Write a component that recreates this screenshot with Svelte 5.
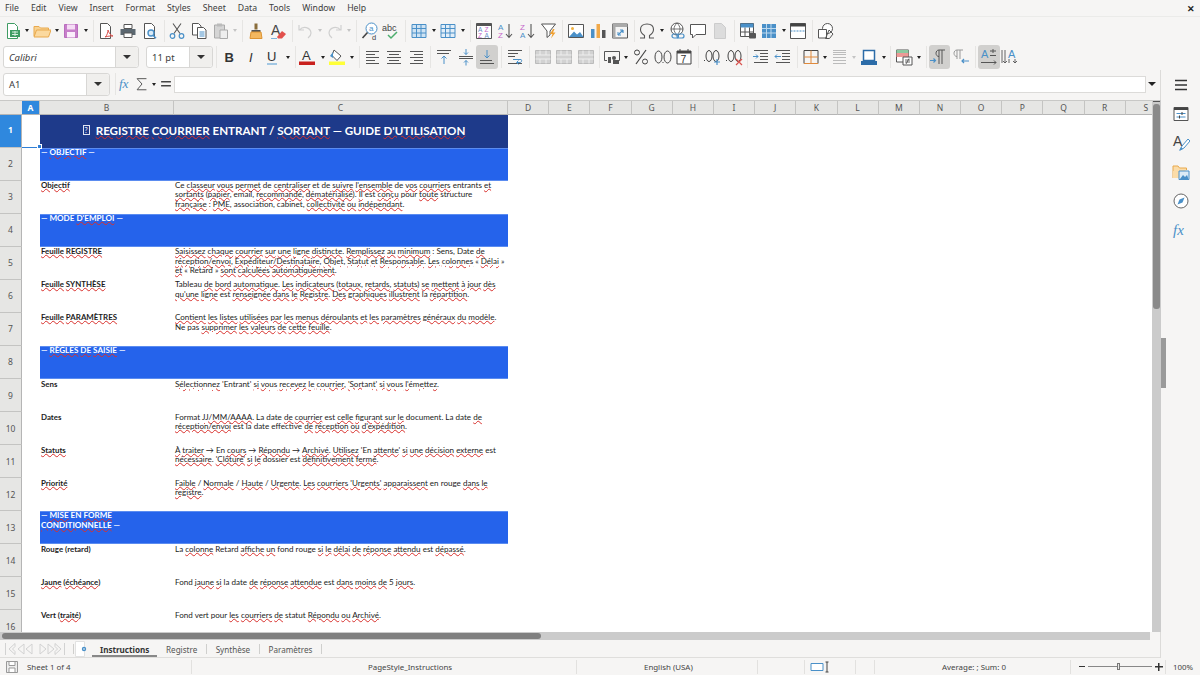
<script>
  const menus = ['File', 'Edit', 'View', 'Insert', 'Format', 'Styles', 'Sheet', 'Data', 'Tools', 'Window', 'Help'];

  const g = '#555', b = '#4a90c8', lb = '#7fb4dc';
  const lines = (ys, x1, x2, c = g) => ys.map((y, i) => `<path d="M${Array.isArray(x1) ? x1[i] : x1} ${y}H${Array.isArray(x2) ? x2[i] : x2}" stroke="${c}"/>`).join('');
  const cells = (c, f = 'none') => `<path d="M2 2.5h14v13H2z" fill="${f}" stroke="${c}"/><path d="M2 6.5h14M2 11h14M6.5 2.5v13M11 2.5v13" stroke="${c}"/>`;
  const label = (t, x, y, c, s = 8, extra = '') => `<text x="${x}" y="${y}" fill="${c}" font-size="${s}" font-family="Liberation Sans" ${extra}>${t}</text>`;

  const icons = {
    new: `<path d="M3.5 1.5h7l3 3v12h-10z" fill="#fff" stroke="#3f9c63"/><path d="M6 8h10v7H6z" fill="#3f9c63"/><path d="M8 10h6M8 12.5h6M11 9v5" stroke="#d7efe0"/>`,
    open: `<path d="M1 14V4.5h5l1.500 1.500h8v2" fill="#f8d291" stroke="#e9a94d"/><path d="M1 15l2.500-7H18l-2.500 7z" fill="#fbd99f" stroke="#e9a94d"/>`,
    save: `<path d="M2.500 2.500h13v13h-13z" fill="#c77fca" stroke="#b96cbd"/><path d="M5 2.500h8v5H5z" fill="#f5dcf5"/><path d="M5 10h8v5.500H5z" fill="#fbeefb"/>`,
    pdf: `<path d="M3.500 1.500h7l3 3v12h-10z" fill="#fff" stroke="${g}"/><path d="M8 15c2-1 3-5 3-7 1 3 2 5 5 6-3 0-5 0-8 1z" fill="none" stroke="#d9534f"/>`,
    print: `<path d="M5 2.500h8v4H5z" fill="#fff" stroke="${g}"/><path d="M1.500 7h15v6h-15z" fill="#5b6770"/><path d="M5 11h8v4.500H5z" fill="#fff" stroke="${g}"/>`,
    preview: `<path d="M3.500 1.500h7l3 3v12h-10z" fill="#fff" stroke="${g}"/><circle cx="10" cy="11" r="3" fill="#dcebf6" stroke="${b}" stroke-width="1.400"/><path d="M12 13.200l3 3" stroke="${b}" stroke-width="1.600"/>`,
    cut: `<path d="M5 1.500l7 10M13 1.500l-7 10" stroke="${g}" stroke-width="1.100"/><circle cx="4.500" cy="14" r="2.300" fill="none" stroke="${b}" stroke-width="1.200"/><circle cx="13.500" cy="14" r="2.300" fill="none" stroke="${b}" stroke-width="1.200"/>`,
    copy: `<path d="M2.500 1.500h6l2.500 2.500v9h-8.500z" fill="#fff" stroke="${g}"/><path d="M7.500 5.500h6l2.500 2.500v8.500h-8.500z" fill="#fff" stroke="${g}"/><path d="M9.500 10h5M9.500 12h5M9.500 14h5" stroke="${b}"/>`,
    paste: `<path d="M2.500 3h10v13h-10z" fill="#d5d5d5" stroke="#aaa"/><path d="M5 1.500h5v3H5z" fill="#bbb"/><path d="M8 8h7.500v8.500H8z" fill="#eee" stroke="#aaa"/>`,
    clone: `<path d="M7.500 1.500h3v6h-3z" fill="#8a6d3b"/><path d="M4.500 8h9v2h-9z" fill="#555"/><path d="M4 10h10l1 6.500H3z" fill="#f4b860" stroke="#dd9433"/>`,
    clear: `${label('A', 2, 13, '#444', 14)}<path d="M8 15l5-6 4 3-4 4.500H9z" fill="#e2504c"/><path d="M2 16.500h6" stroke="${lb}"/>`,
    undo: `<path d="M3 3v5h5M3.500 8C7 3.500 14.500 5 15 11c0 2-1 3.500-3 5" fill="none" stroke="#d0d0d0" stroke-width="1.200"/>`,
    redo: `<path d="M15 3v5h-5M14.500 8C11 3.500 3.500 5 3 11c0 2 1 3.500 3 5" fill="none" stroke="#d0d0d0" stroke-width="1.200"/>`,
    find: `<circle cx="10.500" cy="6.500" r="5.500" fill="#fff" stroke="${b}"/>${label('a', 8, 9, b, 8)}<path d="M6.500 10.500L1.500 16" stroke="#444" stroke-width="1.600"/>${label('d', 11, 17.500, '#444', 7.500)}`,
    spell: `${label('abc', 0, 9, '#444', 9)}<path d="M6 13l3 3 6-6" fill="none" stroke="#4cae6d" stroke-width="1.500"/>`,
    table: cells(b, '#cfe3f3'),
    grid: cells(b, '#e2eef8'),
    sort: `<path d="M1.500 1.500h15v15h-15z" fill="#fff" stroke="${g}"/><path d="M1.500 1.500h15v2.500h-15z" fill="${g}"/>${label('A', 3, 10, '#6a8fc8', 6.500)}${label('Z', 9.500, 10, '#c565c9', 6.500)}${label('Z', 3, 16, '#c565c9', 6.500)}${label('A', 9.500, 16, '#6a8fc8', 6.500)}`,
    az: `${label('A', 2, 8, b, 8)}${label('Z', 2, 16, '#c565c9', 8)}<path d="M13 2v13M10 12l3 3.500 3-3.500" fill="none" stroke="${g}" stroke-width="1.100"/>`,
    za: `${label('Z', 2, 8, '#c565c9', 8)}${label('A', 2, 16, b, 8)}<path d="M13 2v13M10 12l3 3.500 3-3.500" fill="none" stroke="${g}" stroke-width="1.100"/>`,
    filter: `<path d="M1.500 2h14l-5.500 7v4l-3 2.500V9z" fill="#fff" stroke="${g}"/><path d="M13 7l-3 5h2.500l-1.500 4.500 4.500-6h-2.500l1.500-3.500z" fill="#f0a030"/>`,
    image: `<path d="M1.500 2.500h15v13h-15z" fill="#fff" stroke="${g}"/><circle cx="5.500" cy="6.500" r="1.500" fill="#f0b040"/><path d="M2 15l5-5.500 3 3 3-2.500 3.500 5z" fill="${b}"/>`,
    chart: `<path d="M2 7h3.500v9H2z" fill="${b}"/><path d="M7.500 2h3.500v14H7.500z" fill="#f0a94a"/><path d="M13 8h3.500v8H13z" fill="#555"/>`,
    pivot: `<path d="M1.500 2h15v14h-15z" fill="#f4f4f4" stroke="${g}"/><path d="M1.500 2h15v3h-15zM1.500 5h3v11h-3z" fill="#aaa"/><path d="M7 13l5-5M12 8h-3M12 8v3" fill="none" stroke="${b}" stroke-width="1.200"/><path d="M7 13h3M7 13v-3" fill="none" stroke="${b}"/>`,
    omega: `<path d="M2 16h4.500v-2.500C4 12 2.500 10 2.500 7.500 2.500 4 5 2 9 2s6.500 2 6.500 5.500c0 2.500-1.500 4.500-4 6V16H16" fill="none" stroke="#555" stroke-width="1.100"/>`,
    link: `<circle cx="9" cy="7" r="6" fill="#fff" stroke="${g}"/><path d="M3 7h12M9 1c-4 4-4 8 0 12M9 1c4 4 4 8 0 12" fill="none" stroke="${g}" stroke-width=".8"/><rect x="4" y="12" width="6.500" height="4" rx="2" fill="none" stroke="${b}" stroke-width="1.200"/><rect x="9" y="12" width="7" height="4" rx="2" fill="none" stroke="${b}" stroke-width="1.200"/>`,
    comment: `<path d="M1.500 2.500h15v10H7l-3.500 3.500v-3.500h-2z" fill="#fff" stroke="${g}"/>`,
    header: `<path d="M3.500 1.500h7l4 4v11h-11z" fill="#dcdcdc" stroke="#ccc"/>`,
    sheetp: `<path d="M1.500 1.500h13v13h-13z" fill="#fff" stroke="${g}"/><path d="M1.500 1.500h13v4h-13z" fill="${b}"/><path d="M6 5.500v9M10.500 5.500v9M1.500 10h13" stroke="${g}"/><rect x="10" y="11" width="7" height="5.500" rx="1" fill="${g}"/>`,
    sheetd: `<path d="M2 2h14v14H2z" fill="${b}"/><path d="M6.500 2v14M11 2v14M2 6.500h14M2 11h14" stroke="#bcd8ee"/>`,
    freeze: `<path d="M1.500 1.500h15v15h-15z" fill="#fff" stroke="${g}"/><path d="M1.500 1.500h15v3h-15z" fill="#444"/><path d="M1.500 9h15" stroke="${b}" stroke-dasharray="2 1"/>`,
    shapes: `<circle cx="10.500" cy="6.500" r="5" fill="#fff" stroke="${g}"/><path d="M1.500 7.500h8v8.500h-8z" fill="#fff" stroke="${g}"/><path d="M12 8l4 4-3.500 4.500H8.500z" fill="none" stroke="${g}"/>`,

    bold: label('B', 3.500, 14, '#333', 13, 'font-weight="700" textLength="9"'),
    italic: label('I', 6, 14, '#333', 13, 'font-style="italic"'),
    under: `${label('U', 3, 13, '#333', 13)}<path d="M3 16h10" stroke="${lb}" stroke-width="1.400"/>`,
    color: `${label('A', 3, 12, '#333', 13)}<path d="M0 13.500h16v3.500H0z" fill="#c9211e"/>`,
    hl: `<path d="M5 2l7 6-4 4.500-5-5z" fill="#fff" stroke="#555"/><path d="M1 8l3-4v6z" fill="${b}"/><path d="M0 13.500h16v3.500H0z" fill="#ffff38"/>`,
    left: lines([3.500, 6.500, 9.500, 12.500, 15.500], 2, [15, 11, 15, 11, 15]),
    center: lines([3.500, 6.500, 9.500, 12.500, 15.500], [2, 4, 2, 4, 2], [16, 14, 16, 14, 16]),
    right: lines([3.500, 6.500, 9.500, 12.500, 15.500], [3, 7, 3, 7, 3], 16),
    top: `${lines([2.500, 5.500], 2, [16, 14])}<path d="M9 16V8M6.500 10.500L9 8l2.500 2.500" fill="none" stroke="${b}"/>`,
    mid: `${lines([8.500, 10.500], 2, [16, 16])}<path d="M9 1v5.500M7 4.500l2 2 2-2M9 17.500V12.500M7 14.500l2-2 2 2" fill="none" stroke="${b}"/>`,
    bottom: `${lines([12.500, 15.500], 2, [14, 16])}<path d="M9 2v8M6.500 7.500L9 10l2.500-2.500" fill="none" stroke="${b}"/>`,
    wrap: `${lines([2.500, 5.500, 8.500, 15.500], 2, [16, 12, 9, 16])}<path d="M7 11.500h8c1 0 1 3-1 3h-3M12.500 12.500l-2 2 2 2" fill="none" stroke="${b}"/>`,
    merge: `<path d="M1.500 2.500h15v13h-15z" fill="#d2d2d2" stroke="#bbb"/><path d="M1.500 7h15M1.500 11h15M6 2.500v4.500M12 2.500v4.500M6 11v4.500M12 11v4.500" stroke="#eee"/>`,
    curr: `<path d="M1.500 3.500h15v9H13" fill="none" stroke="${g}"/><path d="M1.500 3.500v9H4" fill="none" stroke="${g}"/><rect x="5" y="9" width="3" height="6" fill="${g}"/><circle cx="11" cy="10" r="2" fill="${g}"/><rect x="10" y="12" width="6" height="4" fill="#555"/>`,
    pct: `<path d="M14 2L4 16" stroke="#444" stroke-width="1.200"/><circle cx="5" cy="4.500" r="2.500" fill="none" stroke="#444"/><circle cx="13" cy="13.500" r="2.500" fill="none" stroke="#444"/>`,
    num: `<ellipse cx="4.500" cy="9" rx="3.500" ry="6" fill="none" stroke="#444"/><ellipse cx="13.500" cy="9" rx="3.500" ry="6" fill="none" stroke="#444"/><rect x="8.500" y="14" width="1" height="1" fill="#444"/>`,
    date: `<path d="M2 3h14v13H2z" fill="#fff" stroke="#444"/><path d="M2 3h14v2.500H2z" fill="#444"/><path d="M5 1v3M13 1v3" stroke="#444"/>${label('7', 5.500, 14.500, '#333', 10.500)}`,
    addd: `<ellipse cx="6" cy="8" rx="3" ry="5.500" fill="none" stroke="#444"/><ellipse cx="13" cy="8" rx="3" ry="5.500" fill="none" stroke="#444"/><rect x="1" y="12" width="1" height="1" fill="#444"/><path d="M14 11v6M11 14h6" stroke="${b}" stroke-width="1.200"/>`,
    deld: `<ellipse cx="6" cy="8" rx="3" ry="5.500" fill="none" stroke="#444"/><ellipse cx="13" cy="8" rx="3" ry="5.500" fill="none" stroke="#444"/><rect x="1" y="12" width="1" height="1" fill="#444"/><path d="M11 11l6 6M17 11l-6 6" stroke="#d9534f" stroke-width="1.200"/>`,
    indent: `${lines([2.500, 5.500, 8.500, 11.500, 14.500], [2, 8, 8, 8, 2], 16)}<path d="M1 8.500h5M4 6.500l2 2-2 2" fill="none" stroke="${b}"/>`,
    outdent: `${lines([2.500, 5.500, 8.500, 11.500, 14.500], [2, 8, 8, 8, 2], 16)}<path d="M1 8.500h6M3 6.500l-2 2 2 2" fill="none" stroke="${b}"/>`,
    border: `<path d="M2 2.500h14v13H2z" fill="none" stroke="#444"/><path d="M9 2.500v13M2 9h14" stroke="#e08a3c"/><path d="M2 15.500h14" stroke="#e08a3c"/>`,
    bstyle: lines([2.500, 4.500, 6.500, 9.500, 12.500, 15.500], 2, 15, '#bbb'),
    bcolor: `<path d="M3.500 2.500h11v10h-11z" fill="#fff" stroke="#2c6ca8" stroke-width="1.500"/><path d="M1 13h16v4H1z" fill="#2c6ca8"/>`,
    cond: `<path d="M1.500 2h12v12h-12z" fill="#fff" stroke="${g}"/><path d="M1.500 2h12v3h-12z" fill="#8cc9a0"/><path d="M1.500 5h12v4h-12z" fill="#ec9a96"/><path d="M8 9h9v8H8z" fill="#fff" stroke="${g}"/><path d="M10 12h5M10 14h5M14 10.500l-3 5.500" stroke="#444" stroke-width=".8"/>`,
    ltr: `<path d="M9 16V2M12 16V2M15 2H9C5 2 5 8.500 9 8.500" fill="none" stroke="${g}"/><path d="M0 12.500h5.500M3.500 10.500l2 2-2 2" fill="none" stroke="${b}" stroke-width="1.200"/>`,
    rtl: `<path d="M5 11V2M8 11V2M11 2H5C1 2 1 8.500 5 8.500" fill="none" stroke="#999"/><path d="M10 13h7M12 11l-2 2 2 2" fill="none" stroke="${b}" stroke-width="1.200"/>`,
    horiz: `${label('A', 1, 10, b, 11)}<path d="M10 3h6M13 1v4M10 7.500h6M1 14.500h15M14 12.500l2 2-2 2" fill="none" stroke="${g}"/>`,
    vert: `${label('A', 7, 10, b, 11)}<path d="M4 2v13M2 13l2 2 2-2M1 2v13M8 11v4M14 11v4M12 13l2 2 2-2" fill="none" stroke="${g}" stroke-width=".9"/>`,

    menu: `<path d="M3 4.500h12M3 9h12M3 13.500h12" stroke="#333" stroke-width="1.500"/>`,
    props: `<path d="M2 2.500h14v13H2z" fill="#fff" stroke="${g}"/><path d="M2 2.500h14v2.500H2z" fill="#444"/><path d="M4.500 8.500h9M4.500 12h9" stroke="${b}"/><path d="M10 7v3M7.500 10.500v3" stroke="#444"/>`,
    styles: `${label('A', 1, 12, '#444', 14)}<path d="M16 5l-6 7-2 4 4-2 6-7z" fill="#fff" stroke="${b}"/><path d="M9 13l-2 4 4-2z" fill="${b}"/>`,
    gallery: `<path d="M1 15V3h5l1.500 2h7v2" fill="#fbdca8" stroke="#e9a94d"/><path d="M1 8h11v7H1z" fill="#fbdca8"/><path d="M7 8h10v8.500H7z" fill="#dcebf6" stroke="${b}"/><path d="M8 16l3-4 2 2 2-2 1.500 4z" fill="${b}"/>`,
    nav: `<circle cx="9" cy="9" r="7" fill="#fff" stroke="#666"/><path d="M12.500 5.500L10.500 10.500 5.500 12.500 7.500 7.500z" fill="${b}"/>`,
    fx: `<text x="1" y="14" fill="${b}" font-size="15" font-family="Liberation Serif" font-style="italic">fx</text>`,
    sigma: `<path d="M14 3H3.500L9 9l-5.500 6.500H14" fill="none" stroke="#555" stroke-width="1.100"/>`,
    equal: `<path d="M3.500 6.500h11M3.500 11h11" stroke="#444" stroke-width="1.700"/>`
  };

  // '|' is a separator, '/' a narrow one, 'd' a small dropdown arrow, '!' marks a pressed button, '~' a greyed arrow
  const row1 = 'new d open d save d | pdf print preview | cut copy paste ~ | clone clear | undo ~ redo ~ | find spell | table d grid d | sort az za filter | image chart pivot | omega d link comment header | sheetp sheetd d freeze | shapes'.split(' ');
  const row2 = '| bold italic under d | color d hl d | left center right | top mid !bottom | wrap | merge merge merge / curr d pct num date | addd deld | indent outdent | border d bstyle ~ bcolor d | cond d | !ltr rtl | !horiz vert'.split(' ');
  const side = ['menu', 'props', 'styles', 'gallery', 'nav', 'fx'];
  const cols = ['D', 'E', 'F', 'G', 'H', 'I', 'J', 'K', 'L', 'M', 'N', 'O', 'P', 'Q', 'R', 'S'];

  const sheet = [
    { sec: ['— {OBJECTIF} —'] },
    { label: '{Objectif}', text: ["Ce {classeur} {vous} {permet} de {centraliser} et de {suivre} {l'ensemble} de {vos} {courriers} entrants {et}", '{sortants} ({papier}, email, {recommandé}, {dématérialisé}). {Il} est {conçu} pour {toute} structure', '{française} : {PME}, association, cabinet, {collectivité} {ou} {indépendant}.'] },
    { sec: ["— MODE {D'EMPLOI} —"] },
    { label: '{Feuille} {REGISTRE}', text: ['{Saisissez} {chaque} {courrier} {sur} {une} {ligne} {distincte}. {Remplissez} {au} {minimum} : Sens, Date {de}', '{réception/envoi}, {Expéditeur/Destinataire}, {Objet}, {Statut} {et} {Responsable}. {Les} {colonnes} « {Délai} »', '{et} « Retard » {sont} {calculées} {automatiquement}.'] },
    { label: '{Feuille} {SYNTHÈSE}', text: ['Tableau {de} {bord} {automatique}. {Les} {indicateurs} ({totaux}, {retards}, {statuts}) {se} {mettent} {à} {jour} {dès}', "{qu'une} {ligne} est {renseignée} {dans} {le} {Registre}. {Des} {graphiques} {illustrent} la {répartition}."] },
    { label: '{Feuille} {PARAMÈTRES}', text: ['{Contient} {les} {listes} {utilisées} {par} {les} {menus} {déroulants} {et} {les} {paramètres} {généraux} {du} {modèle}.', 'Ne pas {supprimer} {les} {valeurs} {de} {cette} {feuille}.'] },
    { sec: ['— {RÈGLES} {DE} {SAISIE} —'] },
    { label: 'Sens', text: ["{Sélectionnez} 'Entrant' {si} {vous} {recevez} {le} {courrier},  {'Sortant'} {si} {vous} {l'émettez}."] },
    { label: 'Dates', text: ['Format {JJ/MM/AAAA}. La date {de} {courrier} est {celle} {figurant} {sur} {le} document. La date {de}', "{réception/envoi} est la date effective {de} {réception} {ou} {d'expédition}."] },
    { label: '{Statuts}', text: ["{À} {traiter} → En {cours} → {Répondu} → {Archivé}. {Utilisez} 'En {attente}' {si} {une} {décision} {externe} est", "{nécessaire}. {'Clôturé'} {si} {le} dossier est {définitivement} {fermé}."] },
    { label: '{Priorité}', text: ["{Faible} / {Normale} / {Haute} / {Urgente}. {Les} {courriers} {'Urgents'} {apparaissent} en rouge {dans} {le}", '{registre}.'] },
    { sec: ['— {MISE} EN {FORME}', '{CONDITIONNELLE} —'] },
    { label: 'Rouge (retard)', text: ['La {colonne} Retard {affiche} {un} fond rouge {si} {le} {délai} {de} {réponse} {attendu} est {dépassé}.'] },
    { label: '{Jaune} ({échéance})', text: ['Fond {jaune} {si} la date {de} {réponse} {attendue} est {dans} {moins} {de} 5 {jours}.'] },
    { label: 'Vert ({traité})', text: ['Fond vert pour {les} {courriers} {de} statut {Répondu} {ou} {Archivé}.'] }
  ];

  // "{word}" = word flagged by the spell checker
  const parse = (line) => line.split(/(\{[^}]*\})/).filter(Boolean).map((s) =>
    s[0] === '{' ? { t: s.slice(1, -1), bad: true } : { t: s, bad: false });
</script>

{#snippet spelled(line)}
  {#each parse(line) as s}{#if s.bad}<span class="bad">{s.t}</span>{:else}{s.t}{/if}{/each}
{/snippet}

{#snippet toolbar(items)}
  {#each items as it}
    {#if it === '|'}
      <i class="sep"></i>
    {:else if it === '/'}
      <i class="sep narrow"></i>
    {:else if it === 'd'}
      <i class="drop"></i>
    {:else if it === '~'}
      <i class="drop off"></i>
    {:else}
      <span class="btn" class:on={it[0] === '!'}>
        <svg width="18" height="18" viewBox="0 0 18 18">{@html icons[it.replace('!', '')]}</svg>
      </span>
    {/if}
  {/each}
{/snippet}

<div class="app">
  <div class="menubar">
    {#each menus as m}<span>{m}</span>{/each}
    <span class="close">✕</span>
  </div>

  <div class="tools first">{@render toolbar(row1)}</div>

  <div class="tools second">
    <div class="combo font"><span><em>Calibri</em></span><b class="arrow"></b></div>
    <div class="combo size"><span>11 pt</span><b class="arrow"></b></div>
    {@render toolbar(row2)}
  </div>

  <div class="work">
    <div class="main">
      <div class="formula">
        <div class="combo name"><span>A1</span><b class="arrow"></b></div>
        <i class="sep"></i>
        <span class="btn sm"><svg width="18" height="18" viewBox="0 0 18 18">{@html icons.fx}</svg></span>
        <span class="btn sm"><svg width="18" height="18" viewBox="0 0 18 18">{@html icons.sigma}</svg></span>
        <i class="drop"></i>
        <span class="btn sm"><svg width="18" height="18" viewBox="0 0 18 18">{@html icons.equal}</svg></span>
        <div class="input"></div>
        <i class="drop big"></i>
      </div>

      <div class="sheetarea">
        <div class="gridwrap">
          <div class="grid">
            <div class="corner"></div>
            <div class="colh active">A</div>
            <div class="colh">B</div>
            <div class="colh">C</div>
            <div class="colrest">
              {#each cols as c}<div class="colh">{c}</div>{/each}
            </div>

            <div class="rowh active">1</div>
            <div class="cell cursor"><i class="handle"></i></div>
            <div class="title">
              <span class="tofu">?</span>
              <span><span class="bad">REGISTRE</span> <span class="bad">COURRIER</span> ENTRANT / <span class="bad">SORTANT</span> — GUIDE <span class="bad">D'UTILISATION</span></span>
            </div>
            <div class="cell"></div>

            {#each sheet as r, i}
              <div class="rowh">{i + 2}</div>
              <div class="cell"></div>
              {#if r.sec}
                <div class="section">
                  {#each r.sec as l}<div>{@render spelled(l)}</div>{/each}
                </div>
              {:else}
                <div class="cell lbl">{@render spelled(r.label)}</div>
                <div class="cell txt">
                  {#each r.text as l}<div>{@render spelled(l)}</div>{/each}
                </div>
              {/if}
              <div class="cell"></div>
            {/each}
          </div>
          <div class="vscroll"><i class="mark"></i><i class="thumb"></i></div>
        </div>
        <div class="hscroll"><i class="thumb"></i></div>
      </div>

      <div class="tabs">
        <svg class="nav" width="62" height="16" viewBox="0 0 62 16">
          <g fill="none" stroke="#d2d2d2">
            <path d="M1.500 2v12M11 2.500L5 8l6 5.500v-3L8.500 8 11 5.500zM20 3l-6 5 6 5zM28 3l-6 5 6 5zM36 3l6 5-6 5zM44 3l6 5-6 5zM51 2.500L57 8l-6 5.500v-3L53.500 8 51 5.500zM60.500 2v12" />
          </g>
        </svg>
        <i class="tabsep"></i>
        <span class="newtab">
          <svg width="12" height="16" viewBox="0 0 12 16"><path d="M.5.500h9v15h-9z" fill="#fff" stroke="#e2e2e2"/><circle cx="9" cy="8" r="2.200" fill="#4a90c8"/><circle cx="9" cy="8" r=".8" fill="#fff"/></svg>
        </span>
        <span class="tab on">Instructions</span>
        <span class="tab">Registre</span><i class="tabsep"></i>
        <span class="tab">Synthèse</span><i class="tabsep"></i>
        <span class="tab">Paramètres</span><i class="tabsep"></i>
      </div>
    </div>

    <div class="deckhandle"><i></i></div>

    <div class="sidebar">
      {#each side as s}
        <span class="sidebtn"><svg width="18" height="18" viewBox="0 0 18 18">{@html icons[s]}</svg></span>
      {/each}
    </div>
  </div>

  <div class="status">
    <span class="st s1">
      <svg width="12" height="12" viewBox="0 0 12 12"><path d="M.5.500h11v11H.5z" fill="#eee" stroke="#999"/><path d="M3 .5h6v4H3zM3 7h6v4.500H3z" fill="#fff" stroke="#999"/></svg>
      Sheet 1 of 4
    </span>
    <span class="st s2">PageStyle_Instructions</span>
    <span class="st s3">English (USA)</span>
    <span class="st s4"></span>
    <span class="st s5">
      <svg width="22" height="12" viewBox="0 0 22 12"><path d="M1 2.500h12v7H1z" fill="#fff" stroke="#4a90c8"/><path d="M17 1v10M15.500 1h3M15.500 11h3" stroke="#444"/></svg>
    </span>
    <span class="st s6"></span>
    <span class="st s7">Average: ; Sum: 0</span>
    <span class="st s8">
      <i class="minus"></i><i class="track"><b></b></i><i class="plus"></i>
    </span>
    <span class="st s9">100%</span>
  </div>
</div>

<style>
  :global(body) {
    margin: 0;
    background: #f6f5f4;
  }
  .app {
    width: 1200px;
    height: 675px;
    overflow: hidden;
    display: flex;
    flex-direction: column;
    background: #f6f5f4;
    color: #3d3d3d;
    font-family: "Noto Sans", sans-serif;
    font-size: 9px;
  }
  .menubar {
    height: 17px;
    display: flex;
    align-items: center;
    gap: 12px;
    padding-left: 5px;
    font-size: 8.700px;
    border-bottom: 1px solid #ebebe9;
    box-sizing: border-box;
    position: relative;
  }
  .close {
    position: absolute;
    right: 5px;
    top: 2px;
    font-size: 9px;
    font-weight: 700;
    color: #222;
  }
  .tools {
    display: flex;
    align-items: center;
  }
  .first {
    height: 27px;
    padding-left: 2px;
  }
  .second {
    height: 26px;
    padding-left: 3px;
  }
  .btn {
    width: 21.700px;
    height: 24px;
    flex: none;
    display: flex;
    align-items: center;
    justify-content: center;
    border-radius: 3px;
  }
  .btn.on {
    background: #d1d0ce;
  }
  .btn.sm {
    width: 16px;
  }
  .sep {
    width: 6px;
    height: 22px;
    flex: none;
    position: relative;
  }
  .sep.narrow {
    width: 4px;
  }
  .sep::after {
    content: "";
    position: absolute;
    left: 3px;
    top: 0;
    bottom: 0;
    width: 1px;
    background: #e6e5e3;
  }
  .sep.narrow::after {
    left: 2px;
  }
  .drop {
    width: 7.500px;
    height: 10px;
    flex: none;
    display: flex;
    align-items: center;
    justify-content: center;
  }
  .drop::after {
    content: "";
    border-left: 2.500px solid transparent;
    border-right: 2.500px solid transparent;
    border-top: 3px solid #222;
  }
  .drop.off::after {
    border-top-color: #c4c4c4;
  }
  .drop.big {
    width: 12px;
  }
  .drop.big::after {
    border-left-width: 4px;
    border-right-width: 4px;
    border-top-width: 4px;
  }
  .combo {
    height: 22px;
    flex: none;
    display: flex;
    border: 1px solid #d8d7d5;
    border-radius: 3px;
    box-sizing: border-box;
    background: #fff;
    font-size: 9.500px;
  }
  .combo span {
    flex: 1;
    display: flex;
    align-items: center;
    padding-left: 5px;
  }
  .combo em {
    font-style: italic;
  }
  .arrow {
    width: 22px;
    display: flex;
    align-items: center;
    justify-content: center;
    background: #f0efed;
    border-left: 1px solid #d8d7d5;
    border-radius: 0 3px 3px 0;
  }
  .arrow::after {
    content: "";
    border-left: 4px solid transparent;
    border-right: 4px solid transparent;
    border-top: 4px solid #333;
  }
  .font {
    width: 136px;
    margin-right: 7px;
  }
  .size {
    width: 67px;
  }
  .work {
    flex: 1;
    min-height: 0;
    display: flex;
  }
  .main {
    width: 1161px;
    flex: none;
    display: flex;
    flex-direction: column;
  }
  .formula {
    height: 30px;
    box-sizing: border-box;
    padding: 0 3px 2px;
    display: flex;
    align-items: center;
  }
  .name {
    width: 107px;
    height: 23px;
    margin-right: 2px;
  }
  .input {
    width: 973px;
    height: 17px;
    background: #fff;
    border: 1px solid #dcdbd9;
    box-sizing: border-box;
  }
  .sheetarea {
    display: flex;
    flex-direction: column;
  }
  .gridwrap {
    height: 532px;
    flex: none;
    display: flex;
    overflow: hidden;
  }
  .grid {
    width: 1152px;
    height: 532px;
    flex: none;
    display: grid;
    grid-template-columns: 22px 18px 134px 334px 644px;
    /* row 16 is cut by the scrollbar, its label stays centred on the full row */
    grid-template-rows: 13.500px repeat(16, 33.070px);
    overflow: hidden;
    background: #fff;
    border-top: 1px solid #c8c8c6;
    box-sizing: border-box;
    font-family: Lato, sans-serif;
  }
  .corner {
    background: #e8e8e6;
    border-bottom: 1px solid #b5b5b5;
  }
  .colh {
    background: #e6e6e4;
    border-right: 1px solid #c4c4c2;
    border-bottom: 1px solid #b5b5b5;
    box-sizing: border-box;
    display: flex;
    align-items: center;
    justify-content: center;
    font-family: "Noto Sans", sans-serif;
    font-size: 8.500px;
    color: #555;
  }
  .colh.active {
    background: #2f88de;
    color: #fff;
    font-weight: 700;
  }
  .colrest {
    display: grid;
    grid-template-columns: repeat(16, 41.200px);
    width: 644px;
    overflow: hidden;
  }
  .rowh {
    background: #e6e6e4;
    border-right: 1px solid #b5b5b5;
    border-bottom: 1px solid #c4c4c2;
    box-sizing: border-box;
    display: flex;
    align-items: center;
    justify-content: center;
    font-family: "Noto Sans", sans-serif;
    font-size: 8.500px;
    color: #555;
  }
  .rowh.active {
    background: #2f88de;
    color: #fff;
    font-weight: 700;
    padding-bottom: 2px;
  }
  .cell {
    background: #fff;
    min-width: 0;
    white-space: nowrap;
  }
  .cursor {
    border-bottom: 1px solid #2f7fd6;
    box-sizing: border-box;
    position: relative;
  }
  .handle {
    position: absolute;
    right: -2px;
    bottom: -2px;
    width: 3px;
    height: 3px;
    background: #2f7fd6;
    border: 1px solid #fff;
    z-index: 2;
  }
  .title {
    grid-column: 3 / span 2;
    background: #1e3a8a;
    color: #fff;
    display: flex;
    align-items: center;
    justify-content: center;
    gap: 6px;
    padding-bottom: 2px;
    font-size: 11.600px;
    font-weight: 700;
    white-space: nowrap;
    box-sizing: border-box;
  }
  .tofu {
    width: 5px;
    height: 8px;
    border: 1px solid #dfe4f2;
    font-size: 7px;
    line-height: 8px;
    text-align: center;
    font-weight: 400;
  }
  .section {
    grid-column: 3 / span 2;
    background: #2563eb;
    color: #fff;
    font-size: 8.100px;
    font-weight: 700;
    line-height: 9.300px;
    padding: 0 1px;
    box-sizing: border-box;
    box-shadow: inset 0 1px #5b8cf0, inset 0 -1px #5b8cf0;
    white-space: nowrap;
  }
  .lbl {
    font-weight: 700;
    font-size: 7.900px;
    line-height: 9.300px;
    padding: .5px 0 0 1px;
    color: #1c1c1c;
  }
  .txt {
    font-size: 8.050px;
    line-height: 9.300px;
    padding: .5px 0 0 1px;
    color: #1c1c1c;
  }
  .bad {
    text-decoration: underline wavy #d8302c;
    text-decoration-thickness: .6px;
    text-underline-offset: 0;
  }
  .vscroll {
    width: 9px;
    flex: none;
    background: #cbcbcb;
    position: relative;
  }
  .vscroll .mark {
    position: absolute;
    left: 1px;
    right: 1px;
    top: 1px;
    height: 1px;
    background: #555;
  }
  .vscroll .thumb {
    position: absolute;
    left: 1px;
    right: 1px;
    top: 4px;
    height: 205px;
    border-radius: 3px;
    background: #8a8a8a;
  }
  .hscroll {
    height: 8px;
    width: 1150px;
    background: #cbcbcb;
    padding: 1px 2px;
    box-sizing: border-box;
  }
  .hscroll .thumb {
    display: block;
    width: 539px;
    height: 6px;
    border-radius: 3px;
    background: #808080;
  }
  .tabs {
    height: 17px;
    margin-top: 1px;
    display: flex;
    align-items: center;
    padding-left: 4px;
    font-size: 8.100px;
    border-bottom: 1px solid #dfdedc;
    box-sizing: border-box;
    width: 1161px;
  }
  .nav {
    flex: none;
    margin-right: 7px;
  }
  .tabsep {
    width: 1px;
    height: 10px;
    background: #cfcfcd;
    flex: none;
  }
  .newtab {
    margin: 0 5px 0 1px;
    display: flex;
  }
  .tab {
    padding: 0 8.700px;
    height: 16px;
    line-height: 17px;
    color: #555;
    box-sizing: border-box;
  }
  .tab.on {
    font-weight: 700;
    color: #333;
    padding: 0 8px;
    border-bottom: 2px solid #888;
    line-height: 17px;
  }
  .deckhandle {
    width: 5px;
    flex: none;
    padding-top: 268px;
    border-left: 1px solid #dcdbd9;
    margin-left: -1px;
  }
  .deckhandle i {
    display: block;
    width: 5px;
    height: 50px;
    background: #9a9a9a;
  }
  .sidebar {
    flex: 1;
    display: flex;
    flex-direction: column;
    align-items: center;
    padding: 6px 4px 0 0;
    gap: 11px;
  }
  .sidebtn {
    height: 18px;
    display: flex;
  }
  .status {
    height: 17px;
    flex: none;
    display: flex;
    align-items: center;
    font-size: 7.900px;
    color: #444;
  }
  .st {
    height: 14px;
    box-sizing: border-box;
    display: flex;
    align-items: center;
    border-right: 1px solid #e2e1df;
    flex: none;
  }
  .s1 { width: 192px; padding-left: 6px; gap: 9px; }
  .s2 { width: 385px; padding-left: 176px; }
  .s3 { width: 181px; padding-left: 67px; }
  .s4 { width: 47px; }
  .s5 { width: 51px; padding-left: 5px; }
  .s6 { width: 19px; }
  .s7 { width: 196px; padding-left: 67px; }
  .s8 { width: 95px; padding-left: 8px; gap: 3px; }
  .s9 { border: 0; padding-left: 7px; }
  .minus {
    width: 6px;
    height: 1.500px;
    background: #333;
  }
  .plus {
    width: 8px;
    height: 8px;
    background: linear-gradient(#333, #333) center/8px 1.500px no-repeat, linear-gradient(#333, #333) center/1.500px 8px no-repeat;
  }
  .track {
    width: 64px;
    height: 1px;
    background: #888;
    position: relative;
  }
  .track b {
    position: absolute;
    left: 29px;
    top: -3px;
    width: 3px;
    height: 7px;
    background: #e8e8e6;
    border: 1px solid #777;
    box-sizing: border-box;
  }
</style>
